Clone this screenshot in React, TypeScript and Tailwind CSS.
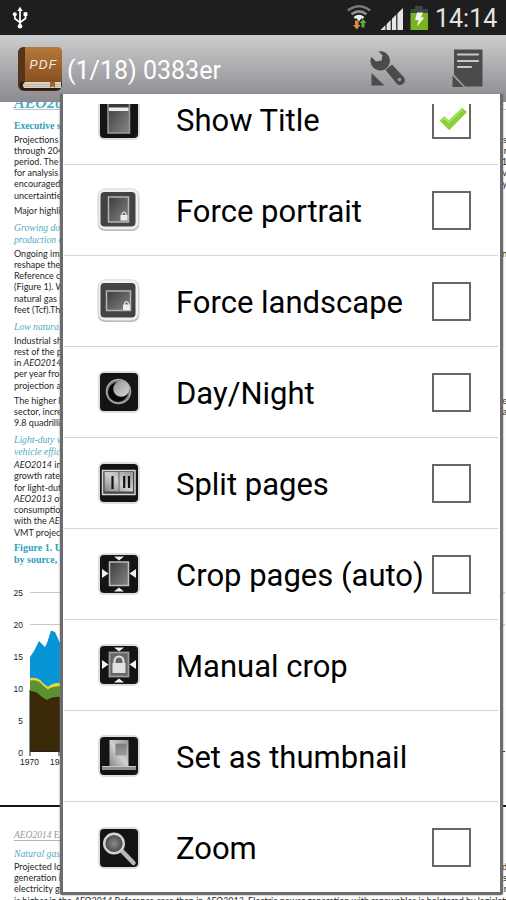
import React from "react";

type IconName = "title" | "portrait" | "landscape" | "night" | "split" | "crop" | "manual" | "thumb" | "zoom";

const items: { label: string; icon: IconName; box: boolean; checked?: boolean }[] = [
  { label: "Show Title", icon: "title", box: true, checked: true },
  { label: "Force portrait", icon: "portrait", box: true },
  { label: "Force landscape", icon: "landscape", box: true },
  { label: "Day/Night", icon: "night", box: true },
  { label: "Split pages", icon: "split", box: true },
  { label: "Crop pages (auto)", icon: "crop", box: true },
  { label: "Manual crop", icon: "manual", box: false },
  { label: "Set as thumbnail", icon: "thumb", box: false },
  { label: "Zoom", icon: "zoom", box: true },
];

function Arrows() {
  return (
    <g fill="#f2f2f2">
      <path d="M17 4.500h10l-5 4zM17 39.500h10l-5-4zM5 17l6.500 4.500-6.500 4.500zM39 17l-6.500 4.500 6.500 4.500z" />
    </g>
  );
}

function Lock({ x, y }: { x: number; y: number }) {
  return (
    <g transform={`translate(${x} ${y})`}>
      <path d="M1.600 4V2.500a1.900 1.900 0 0 1 3.800 0V4" fill="none" stroke="#ddd" strokeWidth="1.200" />
      <rect x="0" y="3.500" width="7" height="5.500" fill="#ececec" />
    </g>
  );
}

function Glyph({ name }: { name: IconName }) {
  switch (name) {
    case "title":
      return (
        <g>
          <rect x="11" y="5" width="21.500" height="31" fill="url(#panel)" stroke="#9a9a9a" strokeWidth="1.500" />
          <rect x="12" y="5" width="19.500" height="6" fill="#3a3a3a" />
          <rect x="12" y="10.500" width="19.500" height="3.500" fill="#ededed" />
        </g>
      );
    case "portrait":
      return (
        <g>
          <rect x="11.500" y="9" width="20" height="25" fill="url(#panel)" stroke="#b5b5b5" strokeWidth="1.500" />
          <Lock x={23.500} y={23.500} />
        </g>
      );
    case "landscape":
      return (
        <g>
          <rect x="9.500" y="12" width="24" height="19.500" fill="url(#panel)" stroke="#b5b5b5" strokeWidth="1.500" />
          <Lock x={26} y={22} />
        </g>
      );
    case "night":
      return (
        <g>
          <circle cx="21.500" cy="21.500" r="12" fill="#7c7c7c" stroke="#a6a6a6" strokeWidth="1.500" />
          <circle cx="21" cy="22" r="10" fill="#060606" />
          <circle cx="24.200" cy="18.800" r="8" fill="url(#moon)" />
        </g>
      );
    case "split":
      return (
        <g>
          <rect x="5.500" y="9.500" width="32.500" height="24" fill="#444" stroke="#d6d6d6" strokeWidth="1.500" />
          <rect x="7.500" y="11" width="28.500" height="19.500" fill="url(#silver)" />
          <path d="M22 11v20" stroke="#666" strokeWidth="1" />
          <path d="M15.500 15v13M27.200 15v12M32 15v12" stroke="#111" strokeWidth="2.200" />
        </g>
      );
    case "crop":
      return (
        <g>
          <Arrows />
          <rect x="12.500" y="10" width="19" height="23.500" fill="url(#panel)" stroke="#bdbdbd" strokeWidth="1.500" />
        </g>
      );
    case "manual":
      return (
        <g>
          <Arrows />
          <rect x="12.500" y="9.500" width="19" height="24" fill="#666" stroke="#999" strokeWidth="1.800" />
          <path d="M17.500 22v-4a4.500 4.500 0 0 1 9 0V22" fill="none" stroke="#e2e2e2" strokeWidth="2" />
          <rect x="15.500" y="20" width="13" height="10" fill="#e2e2e2" />
        </g>
      );
    case "thumb":
      return (
        <g>
          <rect x="12.500" y="6" width="19" height="27" fill="url(#silver)" />
          <rect x="18.500" y="9.500" width="11" height="12" fill="url(#panel)" opacity=".55" />
          <rect x="5" y="32.500" width="34" height="3.500" fill="#8e8e8e" />
          <path d="M5 32.500h34" stroke="#c6c6c6" />
        </g>
      );
    case "zoom":
      return (
        <g>
          <path d="M24 24l12.500 13" stroke="#b8b8b8" strokeWidth="4.500" strokeLinecap="round" />
          <circle cx="17" cy="17.500" r="9.800" fill="url(#lens)" stroke="#d2d2d2" strokeWidth="2.400" />
        </g>
      );
  }
}

function MenuIcon({ name }: { name: IconName }) {
  const soft = name === "portrait" || name === "landscape";
  return (
    <svg width="44" height="44" viewBox="0 0 44 44" className="shrink-0">
      {soft ? (
        <g>
          <rect x=".8" y="1.500" width="41.500" height="41.500" rx="7" fill="#b9b9b9" />
          <rect x="1.200" y=".8" width="40.500" height="40.500" rx="7" fill="#f1f1f1" stroke="#d3d3d3" strokeWidth=".8" />
          <rect x="3.500" y="4" width="35" height="34.500" rx="4" fill="#434343" />
        </g>
      ) : (
        <g>
          <rect x="1" y="1" width="42" height="42" rx="6" fill="#dedede" />
          <rect x="3" y="3" width="38" height="38" rx="4" fill="#141414" />
        </g>
      )}
      <Glyph name={name} />
    </svg>
  );
}

function StatusBar() {
  return (
    <header className="flex h-[35px] shrink-0 items-center bg-[#1e1e1e] pl-[12px] pr-[9px]">
      <svg width="17" height="24" viewBox="0 0 17 24" fill="none" stroke="#fff" strokeWidth="1.700">
        <path d="M8 4v15M2.800 9v3.500L8 16.500M13.500 9v3.500L8 16.500" />
        <path d="M8 .8L10.700 5H5.300z" fill="#fff" stroke="none" />
        <circle cx="2.800" cy="8.200" r="2" fill="#fff" stroke="none" />
        <path d="M11.600 6.200h3.800V10h-3.800z" fill="#fff" stroke="none" />
        <circle cx="8" cy="20.300" r="2.300" fill="#fff" stroke="none" />
      </svg>
      <svg width="82" height="28" viewBox="346 4 82 28" className="ml-auto">
        <g fill="none" strokeWidth="2.600">
          <path d="M348 10.500q11-8.500 22 0" stroke="#797979" />
          <path d="M351.500 14.300q7.500-6 15 0" stroke="#909090" />
          <path d="M354.500 18q4.500-4 9 0" stroke="#eee" />
        </g>
        <path d="M356 17.500q3-2 6 0l-3 4z" fill="#eee" />
        <path d="M355 20.500h3.500V25h2L356.800 29.500 353 25h2z" fill="#e08b3c" />
        <path d="M361.500 27.500V23h-2L363 19l3.500 4h-2v4.500z" fill="#57ae38" />
        <path d="M380.500 30L403 8v22z" fill="#e5e5e5" />
        <path d="M386 23v8M391.300 18v13M396.800 12v19" stroke="#1e1e1e" strokeWidth="1.200" />
        <path d="M415 6h7.500v3h5.500v5h-17.500V9h4.500z" fill="#444" />
        <path d="M410.500 13H428v17h-17.500z" fill="#78b41e" />
        <path d="M417 12.500h6l-2 5h3.500l-7.500 9 1.500-6.500H415z" fill="#f4f4f4" />
      </svg>
      <span className="ml-[7px] w-[62px] whitespace-nowrap pt-[2px] font-['Roboto',sans-serif] text-[25px] leading-[33px] text-[#e3e3e3]">14:14</span>
    </header>
  );
}

function ActionBar() {
  return (
    <div className="flex h-[67px] shrink-0 items-center bg-gradient-to-b from-[#cbcdce] to-[#8b8b8f] pl-[17px] pr-[22px]">
      <svg width="46" height="46" viewBox="0 0 46 46">
        <defs>
          <linearGradient id="cover" x1="0" y1="0" x2="0" y2="1">
            <stop offset="0" stopColor="#b7793c" />
            <stop offset="1" stopColor="#87501e" />
          </linearGradient>
        </defs>
        <rect x="1" y="1" width="44" height="44" rx="6" fill="#4b2b16" />
        <path d="M3 36h41v3q0 5-5 5H9q-6 0-6-5z" fill="#2b1a12" />
        <path d="M8 36h36v6H7q-3-3 1-6z" fill="#dbd5c9" />
        <path d="M6 38.500h37M6 40.500h37" stroke="#aaa08e" strokeWidth=".6" />
        <path d="M8 1h32q5 0 5 5v30H8z" fill="url(#cover)" />
        <path d="M1 7q0-6 7-6v34q-4 0-7 4z" fill="#57351c" />
        <path d="M33 36h5v6l-2.500-2-2.500 2z" fill="#9b6330" />
        <text x="12.500" y="22.500" fontFamily="Liberation Sans, sans-serif" fontSize="12" fontStyle="italic" letterSpacing="1.300" fill="#f5eee5">PDF</text>
      </svg>
      <span className="ml-[4px] mt-[5px] whitespace-nowrap font-['Roboto',sans-serif] text-[25px] leading-[30px] text-white">(1/18) 0383er</span>
      <svg width="114" height="42" viewBox="370 48 114 42" className="ml-auto" fill="#4b4b4c">
        <path d="M371.300 57L376 61.500 381.500 60.500 382.500 55.500 378.500 51.300A9.700 9.700 0 1 1 371.300 57z" />
        <path d="M385.500 70L392 64.500 404 77.500q2 3.500-.5 6t-6 1z" />
        <circle cx="399.500" cy="79.500" r="1.800" fill="#98999c" />
        <path d="M371.500 73l13 12.500h-13z" />
        <path d="M454 49.500h28.500v37h-17.500l-11-12z" />
        <path d="M452.500 75.500l11 11.500h-11z" />
        <path d="M458 54.500h20M458 61h20M458 67h13" stroke="#c8c8ca" strokeWidth="2.200" strokeLinecap="round" />
      </svg>
    </div>
  );
}

function Copy({ lines, className, ends = [] }: { lines: React.ReactNode[]; className: string; ends?: string[] }) {
  return (
    <div className={`${className} w-[493px] whitespace-nowrap font-['Lato',sans-serif] text-[9px] leading-[11.200px] text-[#262626]`}>
      {lines.map((line, i) => (
        <p key={i} className="flex justify-between">
          <span>{line}</span>
          {ends[i] && <span>{ends[i]}</span>}
        </p>
      ))}
    </div>
  );
}

function Subhead({ lines, className }: { lines: string[]; className: string }) {
  return (
    <div className={`${className} whitespace-nowrap font-['Liberation_Serif',serif] text-[9.700px] italic leading-[11.200px] text-[#4fabc5]`}>
      {lines.map((line) => <p key={line}>{line}</p>)}
    </div>
  );
}

function Chart() {
  return (
    <svg width="506" height="199" viewBox="0 571 506 199" className="-ml-[14px] block shrink-0">
      <path d="M30 592.500h475M30 624.500h475" stroke="#c9c9c9" strokeWidth="1" />
      <path d="M30 657l4-6 5-10 6 6 2-4 4-12.500 4 1.500 5 11 4 7v102H30z" fill="#0795d7" />
      <path d="M30 678q9-1 13 5l5 4q5-5 16-4v69H30z" fill="#e5dc3b" />
      <path d="M30 680.500q9-1 13 5l5 4q5-4 16-3v65H30z" fill="#5b9132" />
      <path d="M30 691q7 0 12 6l5 3q5-4 17-3v55H30z" fill="#3b2a08" />
      <path d="M30 690v66M30 751.500h475M59 752v4" stroke="#222" strokeWidth="1" />
      <g fontFamily="Liberation Sans, sans-serif" fontSize="8.500" fill="#222" textAnchor="end">
        <text x="23" y="595.500">25</text>
        <text x="23" y="627.500">20</text>
        <text x="23" y="659.500">15</text>
        <text x="23" y="691.500">10</text>
        <text x="23" y="723.500">5</text>
        <text x="23" y="755.500">0</text>
        <text x="39" y="765">1970</text>
        <text x="69" y="765">1980</text>
      </g>
    </svg>
  );
}

function DocumentPage() {
  return (
    <main className="flex h-[798px] flex-col overflow-hidden bg-white pl-[14px]">
      <h1 className="-mt-[8px] h-[16px] w-[492px] shrink-0 border-b border-[#a9cbd6] whitespace-nowrap font-['Liberation_Serif',serif] text-[16px] font-bold italic leading-[17px] text-[#4fabc5]">AEO2014</h1>
      <h2 className="mt-[10px] h-[12px] whitespace-nowrap font-['Liberation_Serif',serif] text-[9.700px] font-bold leading-[12px] text-[#2c9fc0]">Executive summary</h2>
      <Copy className="mt-[1.500px]" ends={["s", "r", "1", "v", "y"]} lines={["Projections in", "through 2040", "period. The", "for analysis", "encouraged", "uncertainties"]} />
      <Copy className="mt-[4.500px]" lines={["Major highlights"]} />
      <Subhead className="mt-[6px]" lines={["Growing domestic", "production of"]} />
      <Copy className="mt-[3px]" ends={["n"]} lines={["Ongoing impr", "reshape the", "Reference ca", "(Figure 1). W", "natural gas p", "feet (Tcf).The"]} />
      <Subhead className="mt-[6px]" lines={["Low natural gas"]} />
      <Copy className="mt-[2.500px]" lines={["Industrial ship", "rest of the pr", <>in <i>AEO2014</i>.</>, "per year from", "projection an"]} />
      <Copy className="mt-[4px]" ends={["e", "a"]} lines={["The higher le", "sector, increa", "9.8 quadrillio"]} />
      <Subhead className="mt-[6px]" lines={["Light-duty ve", "vehicle efficie"]} />
      <Copy className="mt-[2.500px]" lines={[<><i>AEO2014</i> inc</>, "growth rates", "for light-duty", <><i>AEO2013</i> ove</>, "consumption", <>with the <i>AEO</i></>, "VMT projecti"]} />
      <h3 className="mt-[4px] h-[25px] whitespace-nowrap font-['Liberation_Serif',serif] text-[10px] font-bold leading-[12.500px] text-[#2c9fc0]">Figure 1. U.S.<br />by source, 19</h3>
      <div className="mt-[4px]"><Chart /></div>
      <div className="-ml-[14px] mt-[35px] h-[2px] shrink-0 bg-[#151515]" />
      <p className="mt-[22px] h-[12px] w-[480px] shrink-0 border-b border-[#b5b5b5] font-['Liberation_Serif',serif] text-[9.500px] leading-[12px] text-[#999]"><i>AEO2014</i> Early Release</p>
      <Subhead className="mt-[7px]" lines={["Natural gas ov"]} />
      <Copy
        className="mt-[2px] shrink-0"
        ends={["d", "s", "r"]}
        lines={[
          "Projected low",
          "generation in",
          "electricity ge",
          <>is higher in the <i>AEO2014</i> Reference case than in <i>AEO2013</i>. Electric power generation with renewables is bolstered by legislation</>,
        ]}
      />
    </main>
  );
}

function Menu() {
  return (
    <div className="absolute left-[60px] top-[94px] h-[801px] w-[443px] overflow-hidden rounded-b-[3px] border-b-[3px] border-l-[3px] border-r-[3px] border-[#6c6c6e] bg-white pt-[10px] shadow-[0_0_2px_#777]">
      <div className="h-[788px] overflow-hidden">
        <ul className="-mt-[30px] ml-[1px] mr-[2px]">
          {items.map((item) => (
            <li key={item.label} className="flex h-[91px] items-center border-b border-[#d5d5d5] pl-[33px] pr-[27px] last:border-0">
              <MenuIcon name={item.icon} />
              <span className="ml-[35px] w-0 flex-1 whitespace-nowrap pt-[3px] font-['Roboto',sans-serif] text-[31px] leading-[40px] text-black">{item.label}</span>
              {item.box && (
                <span className="flex size-[39px] shrink-0 items-center justify-center border-[2px] border-[#666]">
                  {item.checked && (
                    <svg width="28" height="24" viewBox="0 0 26 22" className="ml-[2px]">
                      <path d="M.5 12.500L5 8.500l4 4L21.500.5 26 4.500 9.500 21.500z" fill="#8bd038" />
                      <path d="M2 12.500l3-2.500 4 4L22 2" fill="none" stroke="#a9e35d" strokeWidth="1.500" />
                    </svg>
                  )}
                </span>
              )}
            </li>
          ))}
        </ul>
      </div>
    </div>
  );
}

export default function App() {
  return (
    <div className="relative flex h-[900px] w-[506px] flex-col overflow-hidden bg-white">
      <svg width="0" height="0" className="absolute">
        <defs>
          <linearGradient id="panel" x1="0" y1="0" x2="1" y2="1">
            <stop offset="0" stopColor="#3c3c3c" />
            <stop offset="1" stopColor="#858585" />
          </linearGradient>
          <linearGradient id="silver" x1="0" y1="1" x2="1" y2="0">
            <stop offset="0" stopColor="#858585" />
            <stop offset=".5" stopColor="#d0d0d0" />
            <stop offset="1" stopColor="#969696" />
          </linearGradient>
          <linearGradient id="moon" x1="0" y1="0" x2="1" y2="1">
            <stop offset="0" stopColor="#8f8f8f" />
            <stop offset="1" stopColor="#dadada" />
          </linearGradient>
          <radialGradient id="lens">
            <stop offset="0" stopColor="#8a8a8a" />
            <stop offset="1" stopColor="#454545" />
          </radialGradient>
        </defs>
      </svg>
      <StatusBar />
      <ActionBar />
      <DocumentPage />
      <Menu />
    </div>
  );
}
